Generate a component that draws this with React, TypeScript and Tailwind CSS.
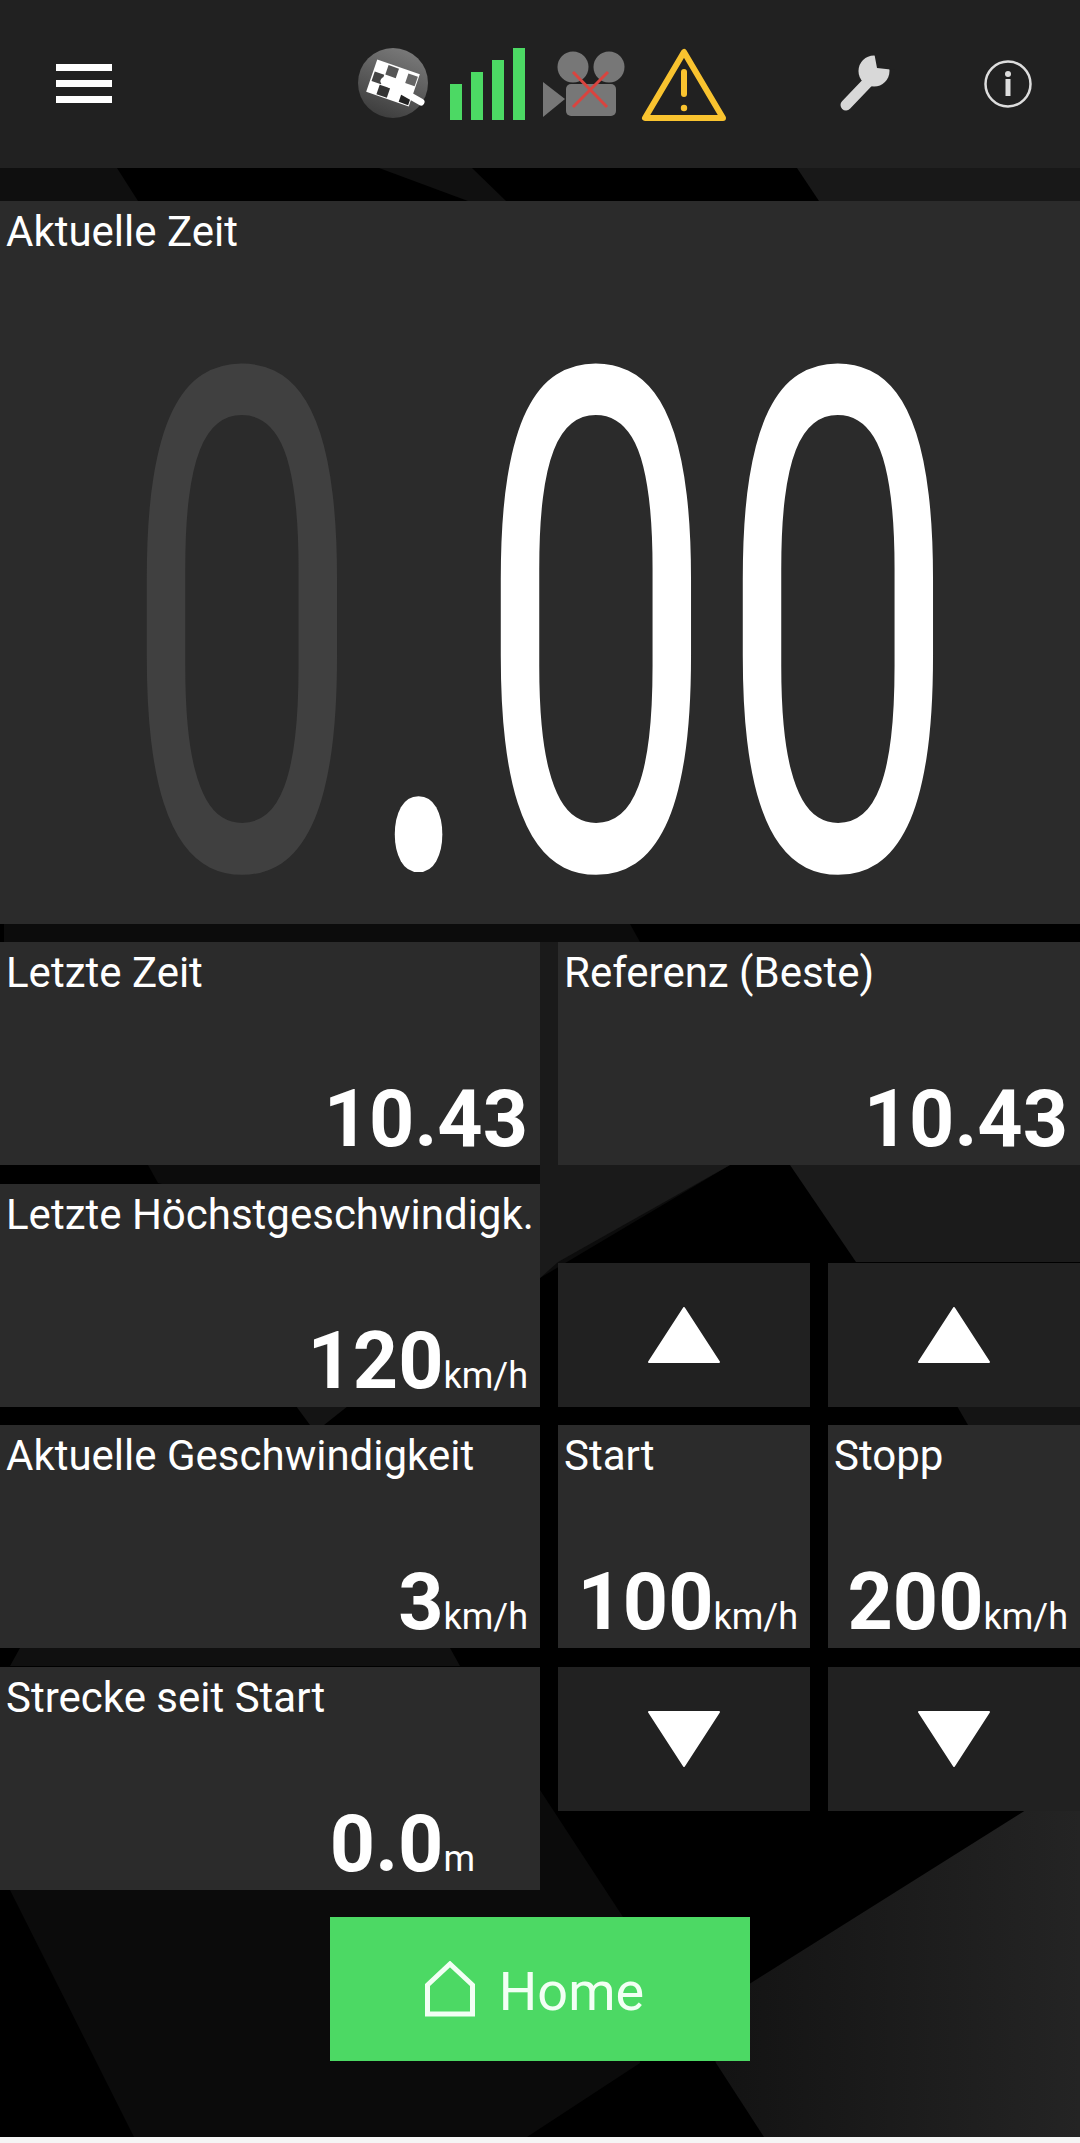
const font = { fontFamily: "Roboto, sans-serif" };

function Backdrop() {
  return (
    <svg className="absolute inset-0" width="1080" height="2143" viewBox="0 0 1080 2143">
      <defs>
        <linearGradient id="rightShard" x1="0" y1="0" x2="1" y2="0">
          <stop offset="0" stopColor="#121212" />
          <stop offset="1" stopColor="#242424" />
        </linearGradient>
      </defs>
      <rect width="1080" height="2143" fill="#000" />
      {/* top gap */}
      <polygon points="0,168 117,168 138,201 0,201" fill="#0f0f0f" />
      <polygon points="379,168 472,168 506,201 468,201" fill="#101010" />
      <polygon points="797,168 1080,168 1080,201 819,201" fill="#181818" />
      {/* shard behind the first rows */}
      <polygon points="4,924 630,924 640,942 730,1165 540,1278 158,1183 148,1165 4,942" fill="#0c0c0c" />
      <polygon points="540,942 558,942 558,1262 540,1278" fill="#1a1a1a" />
      <polygon points="558,1165 730,1165 558,1262" fill="#1a1a1a" />
      <polygon points="790,1165 1080,1165 1080,1262 856,1262" fill="#1b1b1b" />
      {/* thin gaps */}
      <polygon points="296,1406 348,1406 324,1425 310,1425" fill="#141414" />
      <polygon points="957,1406 1080,1406 1080,1425 968,1425" fill="#141414" />
      <polygon points="20,1648 450,1648 460,1666 10,1666" fill="#101010" />
      {/* bottom shards */}
      <polygon points="10,1890 540,1890 540,1790 623,1917 640,2063 527,2137 134,2137" fill="#0b0b0b" />
      <polygon points="1026,1810 1080,1810 1080,2137 764,2137 716,2063 700,2015" fill="url(#rightShard)" />
    </svg>
  );
}

function HeaderIcons() {
  return (
    <svg width="1080" height="168" viewBox="0 0 1080 168" className="block">
      <rect x="56" y="64" width="56" height="7" fill="#fff" />
      <rect x="56" y="80" width="56" height="7" fill="#fff" />
      <rect x="56" y="96" width="56" height="7" fill="#fff" />
      {/* checkered flag */}
      <defs>
        <linearGradient id="disc" x1="0.7" y1="0" x2="0.3" y2="1">
          <stop offset="0" stopColor="#7a7a7a" />
          <stop offset="1" stopColor="#3c3c3c" />
        </linearGradient>
      </defs>
      <circle cx="393" cy="83" r="35" fill="url(#disc)" />
      <g transform="translate(393 83) rotate(19)">
        <rect x="-22.5" y="-17" width="45" height="34" fill="#fff" />
        <rect x="-10" y="-15.5" width="11" height="10" fill="#555" />
        <rect x="11.5" y="-14" width="10" height="10" fill="#666" />
        <rect x="-21" y="-5" width="10" height="10" fill="#444" />
        <rect x="-12" y="6" width="11" height="10" fill="#333" />
        <rect x="11.5" y="6" width="10" height="10" fill="#222" />
      </g>
      <line x1="384" y1="81" x2="421" y2="102" stroke="#fff" strokeWidth="7" strokeLinecap="round" />
      {/* signal */}
      <rect x="450" y="84" width="12" height="36" fill="#4cd964" />
      <rect x="471" y="72" width="12" height="48" fill="#4cd964" />
      <rect x="492" y="60" width="12" height="60" fill="#4cd964" />
      <rect x="513" y="48" width="12" height="72" fill="#4cd964" />
      {/* camera, off */}
      <polygon points="543,82 565,99 543,117" fill="#777" />
      <circle cx="573" cy="67" r="15.5" fill="#777" />
      <circle cx="609" cy="67" r="15.5" fill="#777" />
      <rect x="566" y="84" width="50" height="32" rx="5" fill="#777" />
      <path d="M573 72 L607 107 M608 72 L573 107" stroke="#d9443f" strokeWidth="3" />
      {/* warning */}
      <polygon points="684,52 645,118 723,118" fill="none" stroke="#f9c32f" strokeWidth="6" strokeLinejoin="round" />
      <line x1="684" y1="72" x2="684" y2="94" stroke="#f9c32f" strokeWidth="6" strokeLinecap="round" />
      <circle cx="684" cy="108" r="3.2" fill="#f9c32f" />
      {/* wrench */}
      <line x1="846" y1="105" x2="868" y2="82" stroke="#d8d8d8" strokeWidth="11" strokeLinecap="round" />
      <circle cx="874" cy="71" r="15.5" fill="#d8d8d8" />
      <polygon points="877,68 874,52 895,52 895,70" fill="#212121" />
      {/* info */}
      <circle cx="1008" cy="84" r="22.5" fill="none" stroke="#ddd" strokeWidth="2.5" />
      <circle cx="1008" cy="74" r="3" fill="#ddd" />
      <rect x="1005.5" y="79" width="5" height="17" fill="#ddd" />
    </svg>
  );
}

function Panel({ label, value, unit, className }: { label: string; value: string; unit?: string; className?: string }) {
  return (
    <div className={`flex h-[223px] flex-col justify-between bg-[#2b2b2b] ${className ?? ""}`}>
      <div className="pl-[6px] pt-[7px] text-[42px] leading-[48px] whitespace-nowrap text-white">{label}</div>
      <div className="flex items-baseline justify-end pr-[12px] whitespace-nowrap text-white">
        <span className="text-[79px] leading-[92px] font-bold">{value}</span>
        {unit && <span className="text-[36px] leading-[42px]">{unit}</span>}
      </div>
    </div>
  );
}

function Arrow({ down, className }: { down?: boolean; className?: string }) {
  return (
    <div className={`flex h-[144px] items-center justify-center bg-[#212121] ${className ?? ""}`}>
      <svg width="72" height="56" viewBox="0 0 72 56">
        <polygon
          points={down ? "1,1 71,1 36,55" : "36,1 71,55 1,55"}
          fill="#fff"
          stroke="#fff"
          strokeWidth="2"
          strokeLinejoin="round"
        />
      </svg>
    </div>
  );
}

export default function App() {
  return (
    <div className="relative flex h-[2143px] w-[1080px] flex-col overflow-hidden bg-black" style={font}>
      <Backdrop />
      <header className="relative h-[168px] bg-[#212121]">
        <HeaderIcons />
      </header>
      <main className="relative flex-1 pt-[33px]">
        <section className="h-[723px] bg-[#2b2b2b]">
          <div className="pl-[6px] pt-[7px] text-[42px] leading-[48px] text-white">Aktuelle Zeit</div>
          <div className="mt-[43px] ml-[123px] h-[615px] text-[700px] leading-[660px] whitespace-nowrap text-white">
            <span className="inline-block w-[242px] origin-left scale-x-[0.605] text-[#404040]">0</span>
            <span className="inline-block w-[112px] origin-left scale-x-[0.605]">.</span>
            <span className="inline-block w-[242px] origin-left scale-x-[0.605]">0</span>
            <span className="inline-block w-[242px] origin-left scale-x-[0.605]">0</span>
          </div>
        </section>
        <div className="mt-[18px] grid grid-cols-[540px_252px_252px] gap-x-[18px] gap-y-[18.5px]">
          <Panel label="Letzte Zeit" value="10.43" />
          <Panel label="Referenz (Beste)" value="10.43" className="col-span-2" />
          <Panel label="Letzte Höchstgeschwindigk." value="120" unit="km/h" />
          <Arrow className="self-end" />
          <Arrow className="self-end" />
          <Panel label="Aktuelle Geschwindigkeit" value="3" unit="km/h" />
          <Panel label="Start" value="100" unit="km/h" />
          <Panel label="Stopp" value="200" unit="km/h" />
          <Panel label="Strecke seit Start" value="0.0" unit="m" className="pr-[53px]" />
          <Arrow down className="self-start" />
          <Arrow down className="self-start" />
        </div>
        <div className="mt-[27.5px] flex justify-center">
          <button className="flex h-[144px] w-[420px] items-center justify-center gap-[24px] bg-[#4cd964] pr-[11px] text-[54px] text-[#f2fff4]">
            <svg width="50" height="56" viewBox="0 0 50 56">
              <polygon points="25,3 47.5,24 47.5,53 2.5,53 2.5,24" fill="none" stroke="#f2fff4" strokeWidth="5" />
            </svg>
            <span className="pt-[5px]">Home</span>
          </button>
        </div>
      </main>
      <div className="relative h-[6px] bg-[#f5f5f5]" />
    </div>
  );
}
